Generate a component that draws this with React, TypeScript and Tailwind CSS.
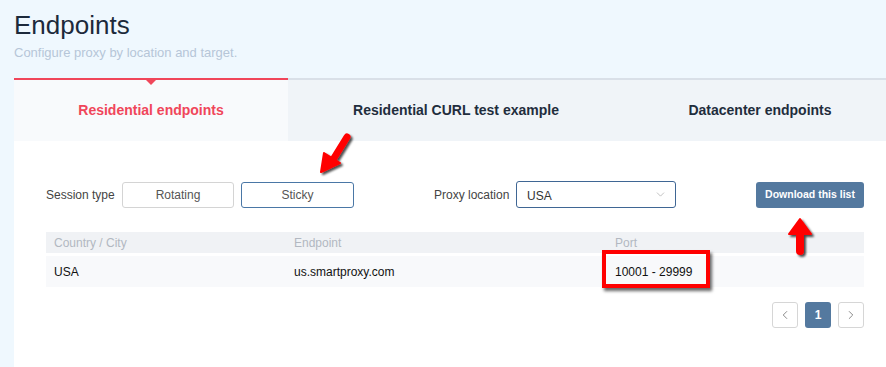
import { ChevronDown, ChevronLeft, ChevronRight } from "lucide-react";

const TABS = [
  { label: "Residential endpoints", w: "w-[274px]", active: true },
  { label: "Residential CURL test example", w: "w-[336px]", active: false },
  { label: "Datacenter endpoints", w: "w-[272px]", active: false },
];

function ArrowDown() {
  // red annotation arrow pointing down-left
  return (
    <svg width="48" height="50" viewBox="0 0 48 50" className="absolute left-[310px] top-[128px]">
      <defs>
        <filter id="sh1" x="-30%" y="-30%" width="160%" height="160%">
          <feDropShadow dx="2" dy="2" stdDeviation="1.2" floodColor="#000" floodOpacity="0.7" />
        </filter>
      </defs>
      <g filter="url(#sh1)">
        <path d="M37 9 L24 30" stroke="#ff0000" strokeWidth="7" strokeLinecap="round" fill="none" />
        <path d="M11 44 L14 25 L30 35 Z" fill="#ff0000" stroke="#ff0000" strokeWidth="2" strokeLinejoin="round" />
      </g>
    </svg>
  );
}

function ArrowUp() {
  return (
    <svg width="30" height="46" viewBox="0 0 30 46" className="absolute left-[786px] top-[215px]">
      <defs>
        <filter id="sh2" x="-40%" y="-30%" width="180%" height="160%">
          <feDropShadow dx="2" dy="2" stdDeviation="1.2" floodColor="#000" floodOpacity="0.7" />
        </filter>
      </defs>
      <g filter="url(#sh2)">
        <path d="M14 4 L3 19 L25 19 Z" fill="#ff0000" stroke="#ff0000" strokeWidth="2" strokeLinejoin="round" />
        <path d="M14 17 L14 36" stroke="#ff0000" strokeWidth="8" strokeLinecap="round" />
      </g>
    </svg>
  );
}

export default function App() {
  return (
    <div
      className="relative w-[886px] h-[367px] overflow-hidden bg-[#eff8fe] pl-[14px] text-[#333]"
      style={{ fontFamily: '"Liberation Sans", Arial, sans-serif' }}
    >
      {/* Header */}
      <div className="pt-[10px] h-[78px]">
        <h1 className="text-[26px] leading-[30px] text-[#1c2a3b]">Endpoints</h1>
        <p className="mt-[5px] text-[13px] leading-[16px] text-[#b6c6d8]">Configure proxy by location and target.</p>
      </div>

      {/* Tabs */}
      <div className="flex h-[63px]">
        {TABS.map((t) => (
          <div
            key={t.label}
            className={`${t.w} shrink-0 relative flex items-center justify-center border-t-2 text-[14px] font-bold ${
              t.active
                ? "border-[#f0465a] bg-[#f8fafc] text-[#f0465a]"
                : "border-[#d9e0e8] bg-[#f0f4f8] text-[#1f2d3d]"
            }`}
          >
            {t.active && (
              <span className="absolute left-1/2 top-0 -translate-x-1/2 w-0 h-0 border-x-[5px] border-x-transparent border-t-[5px] border-t-[#f0465a]" />
            )}
            <span className="mt-[-1px]">{t.label}</span>
          </div>
        ))}
      </div>

      {/* Content */}
      <div className="bg-white h-[226px] pl-[32px] pr-[22px] pt-[40px]">
        <div className="flex items-center h-[27px] text-[12px]">
          <span className="w-[76px] text-[#444]">Session type</span>
          <button className="w-[112px] h-[26px] border border-[#d4d4d4] rounded-[3px] text-[#555]">Rotating</button>
          <button className="ml-[7px] w-[113px] h-[26px] border border-[#4a77a6] rounded-[3px] text-[#555]">Sticky</button>
          <span className="ml-[80px] w-[82px] text-[#444]">Proxy location</span>
          <div className="w-[160px] h-[27px] border border-[#3f6694] rounded-[3px] flex items-center justify-between pl-[10px] pr-[8px]">
            <span className="text-[#333] mt-[2px]">USA</span>
            <ChevronDown size={13} strokeWidth={1.3} className="text-[#aaa]" />
          </div>
          <button className="ml-auto w-[108px] h-[26px] rounded-[3px] bg-[#54799f] text-white font-bold text-[10.5px]">
            Download this list
          </button>
        </div>

        {/* Table */}
        <div className="mt-[24px] text-[12px]">
          <div className="flex h-[21px] items-center bg-[#f0f2f5] text-[#b2b8c1] pl-[8px]">
            <span className="w-[240px]">Country / City</span>
            <span className="w-[321px]">Endpoint</span>
            <span>Port</span>
          </div>
          <div className="mt-[3px] flex h-[31px] items-center bg-[#f8f9fb] text-[#111] pl-[8px]">
            <span className="w-[240px]">USA</span>
            <span className="w-[321px]">us.smartproxy.com</span>
            <span className="relative">
              10001 - 29999
              <span className="absolute left-[-13px] top-[-13px] w-[108px] h-[38px] border-[4px] border-[#ff0000] shadow-[2px_3px_3px_rgba(0,0,0,0.6)]" />
            </span>
          </div>
        </div>

        {/* Pagination */}
        <div className="mt-[15px] flex justify-end gap-[7px]">
          <button className="w-[26px] h-[26px] border border-[#d6d6d6] rounded-[3px] flex items-center justify-center text-[#666]">
            <ChevronLeft size={14} strokeWidth={1.3} />
          </button>
          <button className="w-[26px] h-[26px] rounded-[3px] bg-[#54799f] text-white text-[12px] font-bold">1</button>
          <button className="w-[26px] h-[26px] border border-[#d6d6d6] rounded-[3px] flex items-center justify-center text-[#666]">
            <ChevronRight size={14} strokeWidth={1.3} />
          </button>
        </div>
      </div>

      <ArrowDown />
      <ArrowUp />
    </div>
  );
}
